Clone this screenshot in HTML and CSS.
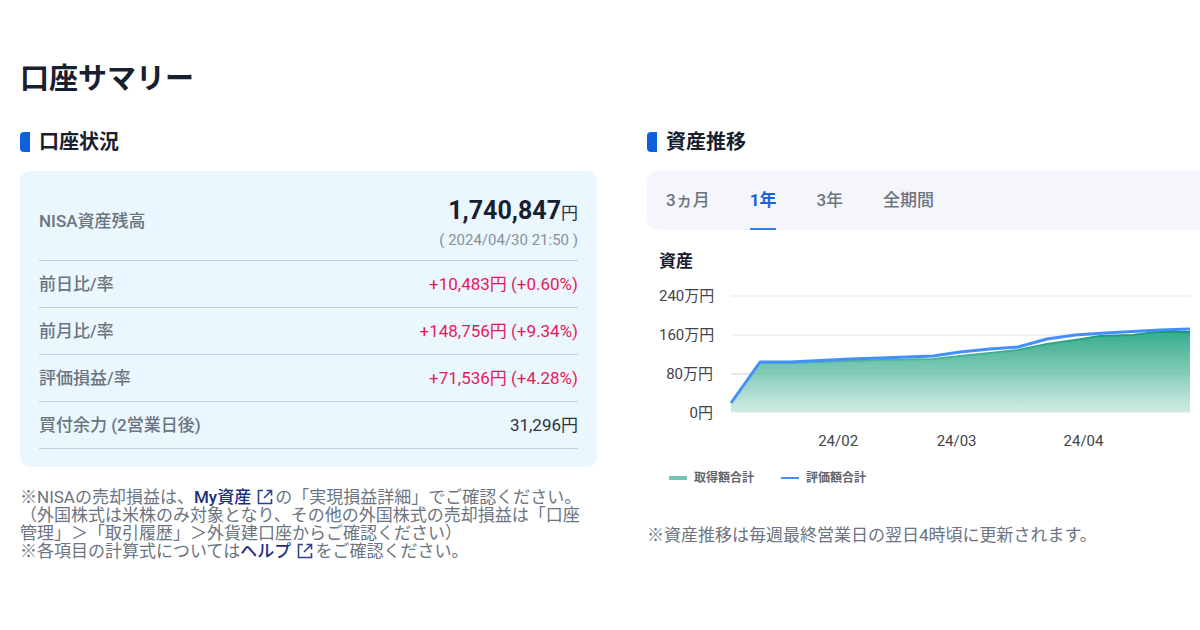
FILE: index.html
```html
<!DOCTYPE html>
<html lang="ja">
<head>
<meta charset="utf-8">
<meta name="viewport" content="width=device-width, initial-scale=1">
<title>口座サマリー</title>
<link rel="stylesheet" href="styles.css">
</head>
<body>
<main class="summary">
  <h1 class="page-title">口座サマリー</h1>
  <div class="columns">
    <section class="column">
      <h2 class="section-title">口座状況</h2>
      <div class="card">
        <table class="status">
          <tbody>
            <tr class="status-total">
              <th scope="row">NISA資産残高</th>
              <td><div class="total"><strong class="total-number">1,740,847</strong>円</div><div class="total-date">( 2024/04/30 21:50 )</div></td>
            </tr>
            <tr><th scope="row">前日比/率</th><td class="gain">+10,483円 (+0.60%)</td></tr>
            <tr><th scope="row">前月比/率</th><td class="gain">+148,756円 (+9.34%)</td></tr>
            <tr><th scope="row">評価損益/率</th><td class="gain">+71,536円 (+4.28%)</td></tr>
            <tr><th scope="row">買付余力 (2営業日後)</th><td>31,296円</td></tr>
          </tbody>
        </table>
      </div>
      <div class="notes">
        <p>※NISAの売却損益は、<a href="#assets">My資産 <svg class="external" viewBox="0 0 16 16" aria-hidden="true"><path d="M6 1.500H1.500v13h13V10M9.500 1.500h5v5M14.500 1.500L7 9"/></svg></a>の「実現損益詳細」でご確認ください。</p>
        <p>（外国株式は米株のみ対象となり、その他の外国株式の売却損益は「口座管理」＞「取引履歴」＞外貨建口座からご確認ください）</p>
        <p>※各項目の計算式については<a href="#help">ヘルプ <svg class="external" viewBox="0 0 16 16" aria-hidden="true"><path d="M6 1.500H1.500v13h13V10M9.500 1.500h5v5M14.500 1.500L7 9"/></svg></a>をご確認ください。</p>
      </div>
    </section>
    <section class="column">
      <h2 class="section-title">資産推移</h2>
      <div class="tabs" role="tablist">
        <button class="tab" type="button" role="tab" aria-selected="false">3ヵ月</button>
        <button class="tab tab-active" type="button" role="tab" aria-selected="true">1年</button>
        <button class="tab" type="button" role="tab" aria-selected="false">3年</button>
        <button class="tab" type="button" role="tab" aria-selected="false">全期間</button>
      </div>
      <div class="chart">
        <h3 class="chart-title">資産</h3>
        <div class="chart-body">
          <div class="y-axis"><span>240万円</span><span>160万円</span><span>80万円</span><span>0円</span></div>
          <svg class="plot" viewBox="0 0 459 118" preserveAspectRatio="none" role="img" aria-label="取得額合計と評価額合計の推移">
            <defs>
              <linearGradient id="area" gradientUnits="userSpaceOnUse" x1="0" y1="36" x2="0" y2="118">
                <stop offset="0" stop-color="#33ab8b"/>
                <stop offset="1" stop-color="#d3ece5"/>
              </linearGradient>
              <linearGradient id="edge" gradientUnits="userSpaceOnUse" x1="0" y1="36" x2="0" y2="118">
                <stop offset="0" stop-color="#149b78"/>
                <stop offset="1" stop-color="#c0e4da"/>
              </linearGradient>
            </defs>
            <path class="grid-line" d="M0 1H459M0 40H459M0 79H459M0 117H459"/>
            <path fill="url(#area)" d="M0 109L29 68L59 68L119 66L149 65L202 64L229 61L259 58L287 55L316 49L344 45L369 41L402 40L424 37L459 37V117H0Z"/>
            <path class="edge-line" d="M29 68L59 68L119 66L149 65L202 64L229 61L259 58L287 55L316 49L344 45L369 41L402 40L424 37L459 37"/>
            <path class="grid-line grid-over" d="M0 79H459"/>
            <path class="value-line" d="M0 108L29 67L59 67L119 64L149 63L202 61L229 57L259 54L287 52L316 44L344 40L374 38L429 35L459 34"/>
          </svg>
          <div class="x-axis"><span>24/02</span><span>24/03</span><span>24/04</span></div>
        </div>
        <ul class="legend">
          <li class="legend-cost">取得額合計</li>
          <li class="legend-value">評価額合計</li>
        </ul>
      </div>
      <p class="chart-note">※資産推移は毎週最終営業日の翌日4時頃に更新されます。</p>
    </section>
  </div>
</main>
</body>
</html>
```
FILE: styles.css
```css
* { box-sizing: border-box; }

body {
  margin: 0;
  background: #fff;
  color: #17202e;
  font-family: Roboto, "Noto Sans CJK JP", sans-serif;
  font-size: 17px;
  line-height: 18px;
}

h1, h2, h3, p, ul { margin: 0; padding: 0; }

.summary { padding: 61px 0 60px 20px; overflow: hidden; }

.page-title { font-size: 29px; line-height: 36px; font-weight: 700; }

.columns {
  display: grid;
  grid-template-columns: minmax(0, 577fr) minmax(0, 553fr);
  column-gap: 50px;
  margin-top: 35px;
}

.section-title {
  display: flex;
  align-items: center;
  gap: 9px;
  font-size: 20px;
  line-height: 20px;
  font-weight: 700;
}

.section-title::before {
  content: "";
  width: 10px;
  height: 20px;
  border-radius: 4px 0 0 4px;
  background: #1060db;
}

.card {
  margin-top: 19px;
  padding: 18px 19px;
  border-radius: 10px;
  background: #eaf7fe;
}

.status { width: 100%; border-collapse: separate; border-spacing: 0; }

.status th, .status td {
  height: 47px;
  padding: 0 0 1px;
  border-bottom: 1px solid #c1cfdd;
  vertical-align: middle;
}

.status th { color: #6b7480; font-weight: 500; text-align: left; }
.status td { color: #2b3440; text-align: right; }
.status .status-total th { height: 72px; padding-bottom: 8px; }
.status .status-total td { padding-top: 8px; vertical-align: top; }
.status .gain { color: #e8175d; }

.total { line-height: 28px; }
.total-number { color: #17202e; font-size: 25px; font-weight: 700; }
.total-date { color: #87909a; font-size: 15px; line-height: 26px; }

.notes { margin-top: 21px; padding-right: 8px; color: #6b7480; }
.notes a { color: #1c2f7c; font-weight: 500; text-decoration: none; }

.external {
  width: 16px;
  height: 16px;
  margin: 0 2px;
  fill: none;
  stroke: #2c4487;
  stroke-width: 1.6;
  vertical-align: -2px;
}

.tabs {
  display: flex;
  gap: 40px;
  margin-top: 19px;
  padding-left: 19px;
  border-radius: 10px 0 0 10px;
  background: #f5f6fb;
}

.tab {
  padding: 0;
  height: 59px;
  border: 0;
  border-bottom: 2px solid transparent;
  background: none;
  color: #6b7480;
  font: inherit;
  font-weight: 500;
}

.tab-active { border-bottom-color: #3a80e0; color: #1b63d6; font-weight: 700; }

.chart { padding: 21px 10px 0 12px; }
.chart-title { font-size: 17px; line-height: 20px; font-weight: 700; }

.chart-body {
  display: grid;
  grid-template-columns: 54px minmax(0, 1fr);
  column-gap: 18px;
  margin-top: 16px;
  font-size: 15px;
  color: #3f444b;
}

.y-axis {
  display: flex;
  flex-direction: column;
  gap: 21px;
  text-align: right;
  white-space: nowrap;
}

.plot { width: 100%; height: 118px; margin-top: 8px; overflow: visible; }
.plot path { vector-effect: non-scaling-stroke; }
.grid-line { fill: none; stroke: #f1f2f3; stroke-width: 2; }
.grid-over { stroke: #59a68f; stroke-opacity: 0.1; }
.edge-line { fill: none; stroke: url(#edge); stroke-width: 2; }
.value-line { fill: none; stroke: #4390fb; stroke-width: 3; stroke-linejoin: round; }

.x-axis {
  grid-column: 2;
  display: grid;
  grid-template-columns: 118fr 119fr 135fr;
  margin-top: 10px;
  padding-left: 10.5%;
  padding-right: 8.5%;
  text-align: center;
}

.legend {
  display: flex;
  gap: 27px;
  margin-top: 19px;
  padding-left: 10px;
  list-style: none;
  color: #5d6670;
  font-size: 12px;
  font-weight: 700;
}

.legend li { display: flex; align-items: center; gap: 7px; }
.legend li::before { content: ""; width: 18px; height: 4px; background: #6fc7b0; }
.legend .legend-value::before { height: 2px; background: #4390fb; }

.chart-note { margin-top: 39px; color: #6b7480; }
```
